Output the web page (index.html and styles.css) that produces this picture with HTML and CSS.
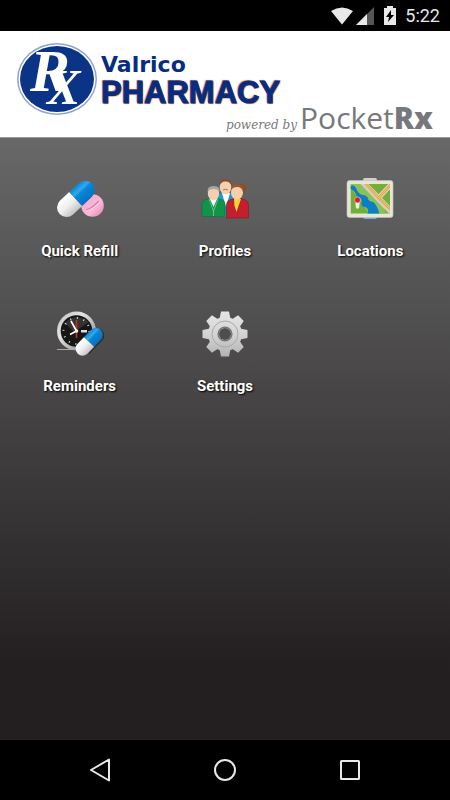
FILE: index.html
```html
<!DOCTYPE html>
<html lang="en">
<head>
    <meta charset="UTF-8">
    <meta name="viewport" content="width=device-width, initial-scale=1.0">
    <title>Valrico Pharmacy</title>
    <link rel="stylesheet" href="styles.css">
</head>
<body>
    <div class="status-bar">
        <svg class="wifi" width="24" height="18" viewBox="0 0 24 18"><path d="M1 4Q12-3 23 4L12 17.500z" fill="#e8e8e8"/></svg>
        <svg class="signal" width="18" height="18" viewBox="0 0 18 18"><path d="M0 18L18 0V18z" fill="#555"/><path d="M0 18L11 7V18z" fill="#e8e8e8"/></svg>
        <svg class="battery" width="12" height="19" viewBox="0 0 12 19"><path d="M3 0h6v2h3v17H0V2h3z" fill="#e8e8e8"/><path d="M7 4L2 11h3l-1 5 6-7H7z" fill="#000"/></svg>
        <span class="time">5:22</span>
    </div>

    <header class="header">
        <div class="brand">
            <svg class="emblem" width="82" height="82" viewBox="0 -6 82 82">
                <ellipse cx="41" cy="37" rx="40" ry="36" fill="#8ea3cf"/>
                <ellipse cx="41" cy="37" rx="38.500" ry="34.500" fill="#fff"/>
                <ellipse cx="41" cy="37" rx="37" ry="33" fill="#0b3487"/>
                <text><tspan x="14" y="49" font-size="60">R</tspan><tspan x="31" y="62" font-size="50">X</tspan></text>
            </svg>
            <h1 class="brand-name">
                <span class="brand-top">Valrico</span>
                <span class="brand-bottom">PHARMACY</span>
            </h1>
        </div>
        <p class="powered"><em>powered by</em> <span class="pocket">Pocket<b>Rx</b></span></p>
    </header>

    <main class="menu">
        <a href="#refill" class="menu-item">
            <svg width="48" height="48" viewBox="0 0 48 48">
                <defs>
                    <linearGradient id="white-half" x1="0" y1="0" x2="0" y2="1"><stop offset="0" stop-color="#fff"/><stop offset=".5" stop-color="#eee"/><stop offset="1" stop-color="#c4c4c8"/></linearGradient>
                    <linearGradient id="blue-half" x1="0" y1="0" x2="0" y2="1"><stop offset="0" stop-color="#0a86d4"/><stop offset=".3" stop-color="#35a8ea"/><stop offset=".45" stop-color="#0787d8"/><stop offset="1" stop-color="#0670bd"/></linearGradient>
                    <linearGradient id="pink" x1="0" y1="0" x2="1" y2="1"><stop offset="0" stop-color="#f7a5cc"/><stop offset=".6" stop-color="#f8b9d6"/><stop offset="1" stop-color="#e27fae"/></linearGradient>
                </defs>
                <circle cx="36.500" cy="30.500" r="11.300" fill="url(#pink)"/>
                <path d="M30 35Q35 34 43 26" fill="none" stroke="#d67ba6" stroke-width="1.200"/>
                <path d="M30 36Q36 35 44 27" fill="none" stroke="#fcd9ea" stroke-width=".8"/>
                <g transform="translate(19.700 24) rotate(-43)">
                    <path d="M0-9.500H-12.500a9.500 9.500 0 0 0 0 19H0z" fill="url(#white-half)"/>
                    <path d="M0-9.500H13a9.500 9.500 0 0 1 0 19H0z" fill="url(#blue-half)"/>
                </g>
            </svg>
            <span>Quick Refill</span>
        </a>
        <a href="#profiles" class="menu-item">
            <svg width="48" height="48" viewBox="0 0 48 48">
                <path d="M16 42V23q1-5 6-5h6q6 0 7 6v18z" fill="#1b9ad8"/>
                <path d="M21 18h8l-4 14z" fill="#fff"/>
                <ellipse cx="24.500" cy="12" rx="5.800" ry="7.500" fill="#f6cfae"/>
                <path d="M18.500 11Q18 4 24 4q7-1 6.500 7Q29 6 24 6.500q-4 0-5.500 4.500z" fill="#80502c"/>
                <path d="M22 15q2.500-1.500 5 0" fill="none" stroke="#a87850" stroke-width="1"/>
                <path d="M1 41.500V30q0-6 7-6h9q7 0 7 6v11.500z" fill="#11934a" stroke="#0b7638" stroke-width=".7"/>
                <path d="M9 24h7l-3.500 8z" fill="#fff"/>
                <path d="M8 24l4.500 12L17 24M12.500 35v6" fill="none" stroke="#83c69a" stroke-width=".8"/>
                <ellipse cx="12.500" cy="18.500" rx="5.700" ry="6.800" fill="#f4cfae"/>
                <path d="M6.700 17q-1-6 6-6t5.700 6q-1-3-5.700-3t-6 3z" fill="#a4a8a8"/>
                <path d="M38 11q1-3 4-2 5 3 3 7-1 3-4 3z" fill="#85502b"/>
                <path d="M25.500 43V31q0-7 7-7h8q7 0 7 7v12z" fill="#c3202f" stroke="#8e1824" stroke-width=".7"/>
                <path d="M33 24h7l-2.500 7-2 6-2-6z" fill="#f5d52d"/>
                <ellipse cx="36" cy="17.500" rx="6" ry="7" fill="#f8cfad"/>
                <path d="M30 15q0-6 6-6 7 0 6 8-1-5-6-5-4 0-6 3z" fill="#925b32"/>
            </svg>
            <span>Profiles</span>
        </a>
        <a href="#locations" class="menu-item">
            <svg width="48" height="48" viewBox="0 0 48 48">
                <rect x="17" y="3" width="14" height="6" rx="2" fill="#d3d1ca"/>
                <path d="M17 40h14v2q0 2-2 2H19q-2 0-2-2z" fill="#69b2df"/>
                <rect x="1" y="5.500" width="46" height="37" rx="2.500" fill="#e7e4d9" stroke="#c3c0b3" stroke-width=".6"/>
                <svg x="4.500" y="9" width="39.500" height="29.500" viewBox="0 0 39.500 29.500">
                    <path d="M0 0h40v30H0z" fill="#72ae3a"/>
                    <path d="M0 0h12l20 18 3 12H19L0 4z" fill="#8cc255"/>
                    <path d="M0 2q4-2 6 3t6 6q5 0 6 5 2 2 5 2 4 4 6 12H17q2-5-2-7-5 0-4-5 1-4-5-6-1-5-6-7z" fill="#0a7fc8"/>
                    <path d="M12-2L42 29" stroke="#d4cfc4" stroke-width="6"/>
                    <path d="M28 14L42-1" stroke="#d8d3c8" stroke-width="5"/>
                    <path d="M14-2L28 14 42 27M28 14L42-1" fill="none" stroke="#e2a23d" stroke-width="2.500"/>
                    <path d="M14-2L28 14 42 27M28 14L42-1" fill="none" stroke="#f8c967" stroke-width="1"/>
                </svg>
                <path d="M9 25h5l-1 8q-1.500 1.500-3 0z" fill="#eee"/>
                <circle cx="11.500" cy="25" r="2.900" fill="#d91c29" stroke="#f4dfd9" stroke-width=".5"/>
            </svg>
            <span>Locations</span>
        </a>
        <a href="#reminders" class="menu-item">
            <svg width="48" height="48" viewBox="0 0 48 48">
                <defs>
                    <linearGradient id="rim" x1="0" y1="0" x2="1" y2="1"><stop offset="0" stop-color="#bbb"/><stop offset=".35" stop-color="#e4e4e4"/><stop offset="1" stop-color="#777"/></linearGradient>
                </defs>
                <path d="M1 39.500h34" stroke="#aaa" stroke-width="1.200"/>
                <circle cx="20.500" cy="21" r="19.500" fill="url(#rim)"/>
                <circle cx="20.500" cy="21" r="15.800" fill="#161616"/>
                <path d="M9 13Q19 2 33 12L18 22z" fill="#333"/>
                <circle cx="20.500" cy="21" r="13" fill="none" stroke="#ddd" stroke-width="2" stroke-dasharray="1 5.807"/>
                <path d="M20.500 21V10M20.500 21v7" stroke="#d8281d" stroke-width="1.600"/>
                <path d="M15 11l5.500 10-6.500 3.500" fill="none" stroke="#fff" stroke-width="1.700"/>
                <circle cx="20.500" cy="21" r="1.800" fill="#eee"/>
                <path d="M25 20h6v2.500h-6z" fill="#ddd"/>
                <g transform="translate(33.200 31.800) rotate(-46)">
                    <path d="M0-5.500H10a7 7 0 0 1 0 14H-9" fill="#111" opacity=".5"/>
                    <path d="M0-7H-9.500a7 7 0 0 0 0 14H0z" fill="url(#white-half)"/>
                    <path d="M0-7H9.500a7 7 0 0 1 0 14H0z" fill="url(#blue-half)"/>
                </g>
            </svg>
            <span>Reminders</span>
        </a>
        <a href="#settings" class="menu-item">
            <svg width="48" height="48" viewBox="0 0 48 48">
                <defs>
                    <linearGradient id="metal" gradientUnits="userSpaceOnUse" x1="0" y1="1" x2="0" y2="47"><stop offset="0" stop-color="#e6e6e6"/><stop offset=".5" stop-color="#d4d4d4"/><stop offset="1" stop-color="#b2b2b2"/></linearGradient>
                    <mask id="gear">
                        <circle cx="24" cy="24" r="17" fill="#fff"/>
                        <g fill="#fff">
                            <path id="teeth" d="M18.500 9l1.500-7.500h8l1.500 7.500v30l-1.500 7.500h-8L18.500 39z"/>
                            <use href="#teeth" transform="rotate(45 24 24)"/>
                            <use href="#teeth" transform="rotate(90 24 24)"/>
                            <use href="#teeth" transform="rotate(135 24 24)"/>
                        </g>
                        <circle cx="24" cy="24" r="6" fill="#000"/>
                    </mask>
                </defs>
                <path d="M0 0h48v48H0z" fill="url(#metal)" mask="url(#gear)"/>
                <circle cx="24" cy="24" r="13" fill="none" stroke="#aaa" stroke-width="1"/>
                <circle cx="24" cy="24" r="6.800" fill="none" stroke="#777" stroke-width="1.600"/>
            </svg>
            <span>Settings</span>
        </a>
    </main>

    <nav class="nav-bar">
        <button type="button" aria-label="Back"><svg width="24" height="24" viewBox="0 0 24 24"><path d="M21 1.500v21L3 12z"/></svg></button>
        <button type="button" aria-label="Home"><svg width="24" height="24" viewBox="0 0 24 24"><circle cx="12" cy="12" r="10"/></svg></button>
        <button type="button" aria-label="Recent apps"><svg width="24" height="24" viewBox="0 0 24 24"><rect x="3" y="3" width="18" height="18" rx=".5"/></svg></button>
    </nav>
</body>
</html>
```
FILE: styles.css
```css
* {
    box-sizing: border-box;
}
body {
    margin: 0;
    min-height: 100vh;
    display: flex;
    flex-direction: column;
    font-family: Roboto, sans-serif;
    background: #000;
    color: #fff;
}
svg {
    display: block;
}
.status-bar {
    display: flex;
    justify-content: flex-end;
    align-items: center;
    height: 31px;
    padding: 0 10px;
    background: #000;
}
.signal {
    margin-left: 2px;
}
.battery {
    margin-left: 10px;
}
.time {
    margin-left: 9px;
    font-size: 18px;
    line-height: 31px;
    color: #e8e8e8;
}
.header {
    height: 107px;
    padding: 5px 17px 0 16px;
    background: #fff;
    border-bottom: 1px solid #999;
}
.brand {
    display: flex;
    gap: 3px;
    height: 67px;
}
.emblem {
    flex: none;
}
.emblem text {
    font-family: "Liberation Serif", serif;
    font-weight: bold;
    font-style: italic;
    fill: #fff;
}
.brand-name {
    margin: 0;
    padding-top: 17px;
    color: #062d80;
}
.brand-top,
.brand-bottom {
    display: block;
}
.brand-top {
    font: bold 22px/24px "DejaVu Sans", sans-serif;
}
.brand-bottom {
    font: bold 31px/32px "Liberation Sans", Arial, sans-serif;
    -webkit-text-stroke: 1px #062d80;
    text-shadow: 1px 1px 1px #e08050, -1px -1px 1px #e08050;
}
.powered {
    display: flex;
    justify-content: flex-end;
    align-items: baseline;
    gap: 3px;
    margin: 0;
    color: #77787b;
}
.powered em {
    font: italic 12px/30px "DejaVu Serif", serif;
}
.pocket {
    font: 30px/30px "Open Sans", sans-serif;
}
.pocket b {
    font-weight: 800;
}
.menu {
    flex: 1;
    display: grid;
    grid-template-columns: repeat(3, 1fr);
    grid-auto-rows: 135px;
    padding: 37px 7px 0;
    background: linear-gradient(#686868, #231f20 88%);
}
.menu-item {
    display: flex;
    flex-direction: column;
    align-items: center;
    gap: 18px;
    color: #fff;
    font-size: 15px;
    line-height: 20px;
    font-weight: bold;
    text-decoration: none;
    text-shadow: 1px 1px 2px #000;
}
.nav-bar {
    display: grid;
    grid-template-columns: repeat(3, 1fr);
    height: 60px;
    padding: 0 38px;
    background: #000;
}
.nav-bar button {
    display: flex;
    justify-content: center;
    align-items: center;
    padding: 0;
    border: none;
    background: none;
}
.nav-bar svg {
    fill: none;
    stroke: #e8e8e8;
    stroke-width: 2;
    stroke-linejoin: round;
}
```
